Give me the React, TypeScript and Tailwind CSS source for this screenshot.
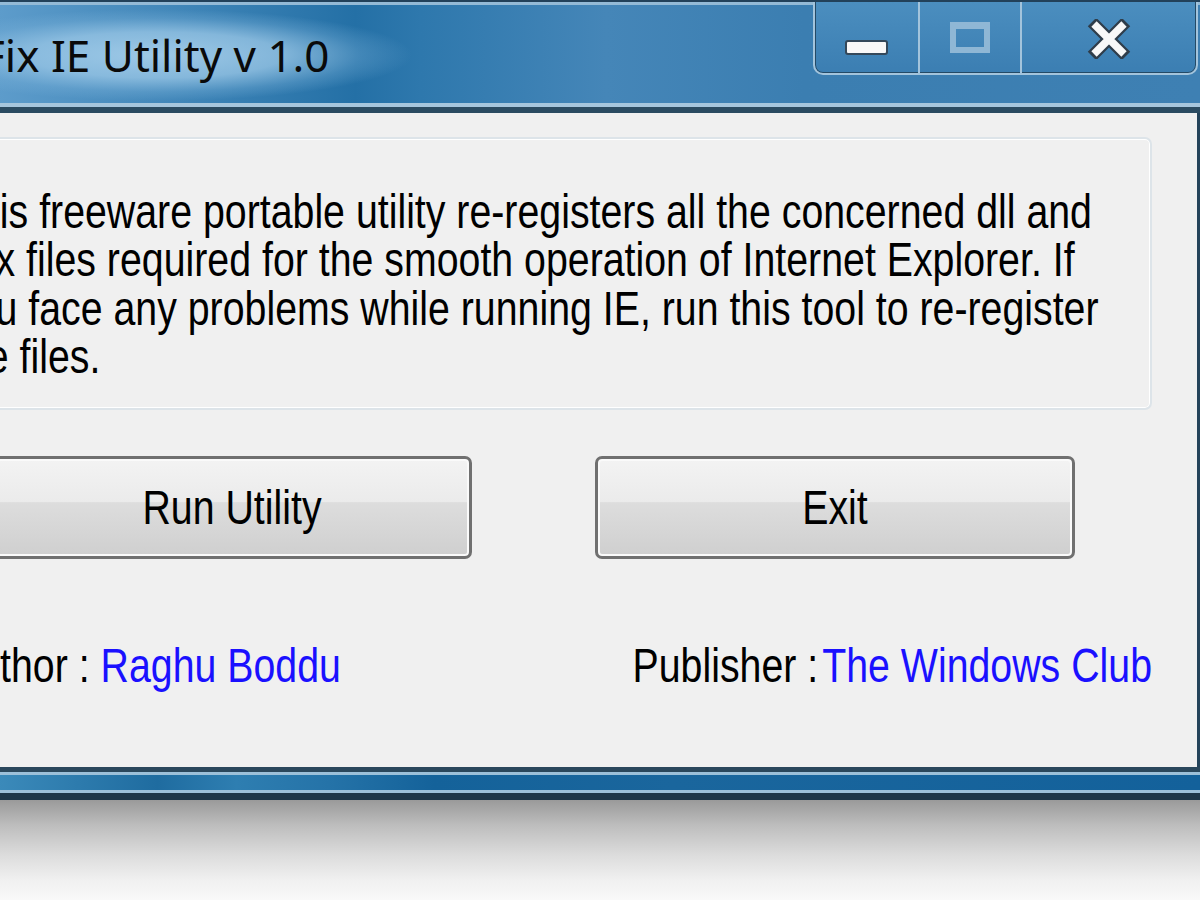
import React from "react";

function CaptionButtons() {
  return (
    <div className="-mt-[3px] mr-[2px] h-[73px] w-[385px] shrink-0 flex rounded-b-[10px] border-2 border-t-0 border-[#a3c4dc] shadow-[inset_0_-1px_0_#244a66,inset_1px_0_0_#244a66,inset_-1px_0_0_#244a66] overflow-hidden bg-[linear-gradient(to_bottom,#4b8ebf,#3b7eb2)]">
      <div className="w-[105px] border-r-2 border-[#a3c4dc] flex justify-center pt-[38px]">
        <div className="w-[43px] h-[15px] rounded-[3px] bg-[#f8f8f8] border-2 border-[#34485a]" />
      </div>
      <div className="w-[102px] border-r-2 border-[#a3c4dc] flex justify-center pt-[20px]">
        <div className="w-[40px] h-[31px] border-[6px] border-t-[7px] border-[#8fb7d5]" />
      </div>
      <div className="flex-1 flex justify-center pt-[17px]">
        <svg width="44" height="40" viewBox="0 0 44 40">
          <path d="M5 3 L39 37 M39 3 L5 37" stroke="#2f3d4a" strokeWidth="12" fill="none" />
          <path d="M7 5 L37 35 M37 5 L7 35" stroke="#f8f8f8" strokeWidth="7.5" fill="none" />
        </svg>
      </div>
    </div>
  );
}

function WinButton({ label, extra }: { label: string; extra: string }) {
  return (
    <div
      className={`${extra} w-[480px] h-[103px] shrink-0 rounded-[7px] border-[3px] border-[#707070] shadow-[inset_0_0_0_2px_#fafafa] bg-[linear-gradient(to_bottom,#f3f3f3_0%,#ebebeb_44%,#dddddd_45%,#cfcfcf_100%)] flex items-center justify-center text-[39.3px] leading-none text-black`}
    >
      <span className="inline-block scale-y-[1.2]">{label}</span>
    </div>
  );
}

export default function App() {
  return (
    <div className="w-[1200px] h-[900px] overflow-hidden bg-[#f8f8f8] flex flex-col font-['Liberation_Sans',Arial,sans-serif]">
      <div className="ml-[-120px] w-[1320px] h-[800px] shrink-0 flex flex-col">
        {/* Title bar */}
        <div className="h-[113px] shrink-0 flex flex-col border-t-2 border-[#22415a]">
          <div className="flex-1 flex border-t-[3px] border-[#94bad6] bg-[linear-gradient(to_right,#5d9ccb_0%,#5d9ccb_9%,#2470a6_36%,#2e78ad_41%,#4586b8_55%,#3b7eb1_70%,#3e80b3_100%)]">
            <div className="flex-1 min-w-0 pl-[20px] pt-[4px]">
              <span className="inline-block px-[82px] py-[24px] leading-none text-[44px] text-[#0a0a0a] font-['Noto_Sans',sans-serif] bg-[radial-gradient(closest-side,rgba(165,206,234,0.92),rgba(150,196,228,0.8)_50%,rgba(120,176,216,0.35)_80%,rgba(110,170,212,0)_100%)]">
                Fix IE Utility v 1.0
              </span>
            </div>
            <CaptionButtons />
          </div>
          <div className="h-[4px] bg-[#a6c6dd]" />
          <div className="h-[6px] bg-[#2b4b61]" />
        </div>

        {/* Client area row */}
        <div className="flex-1 flex min-h-0">
          <div className="w-[8px] shrink-0 bg-[#3a80b3]" />
          <div className="flex-1 min-w-0 bg-[#f0f0f0] flex flex-col">
            {/* Group box */}
            <div className="mt-[24px] ml-[22px] mr-[45px] h-[273px] shrink-0 rounded-[7px] border-2 border-[#dde4e9] shadow-[inset_0_0_0_1px_#ffffff] pl-[42px] pt-[48px]">
              <p className="origin-top scale-y-[1.2] text-[39.3px] leading-[40.4px] text-black whitespace-nowrap">
                This freeware portable utility re-registers all the concerned dll and
                <br />
                ocx files required for the smooth operation of Internet Explorer. If
                <br />
                you face any problems while running IE, run this tool to re-register
                <br />
                the files.
              </p>
            </div>

            {/* Buttons */}
            <div className="mt-[46px] flex">
              <WinButton label="Run Utility" extra="ml-[104px]" />
              <WinButton label="Exit" extra="ml-[123px]" />
            </div>

            {/* Labels */}
            <div className="mt-[87px] ml-[64px] mr-[45px] flex justify-between text-[39.3px] leading-none whitespace-nowrap">
              <div className="scale-y-[1.2]">
                <span className="text-black">Author : </span>
                <span className="text-[#1a10ff]">Raghu Boddu</span>
              </div>
              <div className="scale-y-[1.2]">
                <span className="text-black">Publisher :</span>
                <span className="ml-[4px] text-[#1a10ff]">The Windows Club</span>
              </div>
            </div>
          </div>
          <div className="w-[3px] shrink-0 bg-[#24435a]" />
        </div>

        {/* Bottom frame */}
        <div className="h-[33px] shrink-0 border-t-[5px] border-b-[7px] border-t-[#2a475c] border-b-[#1d3649]">
          <div className="h-full border-y-[3px] border-[#9cc0d9] bg-[linear-gradient(to_right,#3b8aba_0%,#3b8aba_9%,#1f6ca0_21%,#2e7eb1_27%,#2573a8_34%,#14629a_42%,#1a669d_60%,#13619b_100%)]" />
        </div>
      </div>

      {/* Drop shadow */}
      <div className="flex-1 bg-[linear-gradient(to_bottom,#9a9a9a_0%,#bdbdbd_25%,#dcdcdc_55%,#f0f0f0_80%,#f9f9f9_100%)]" />
    </div>
  );
}
